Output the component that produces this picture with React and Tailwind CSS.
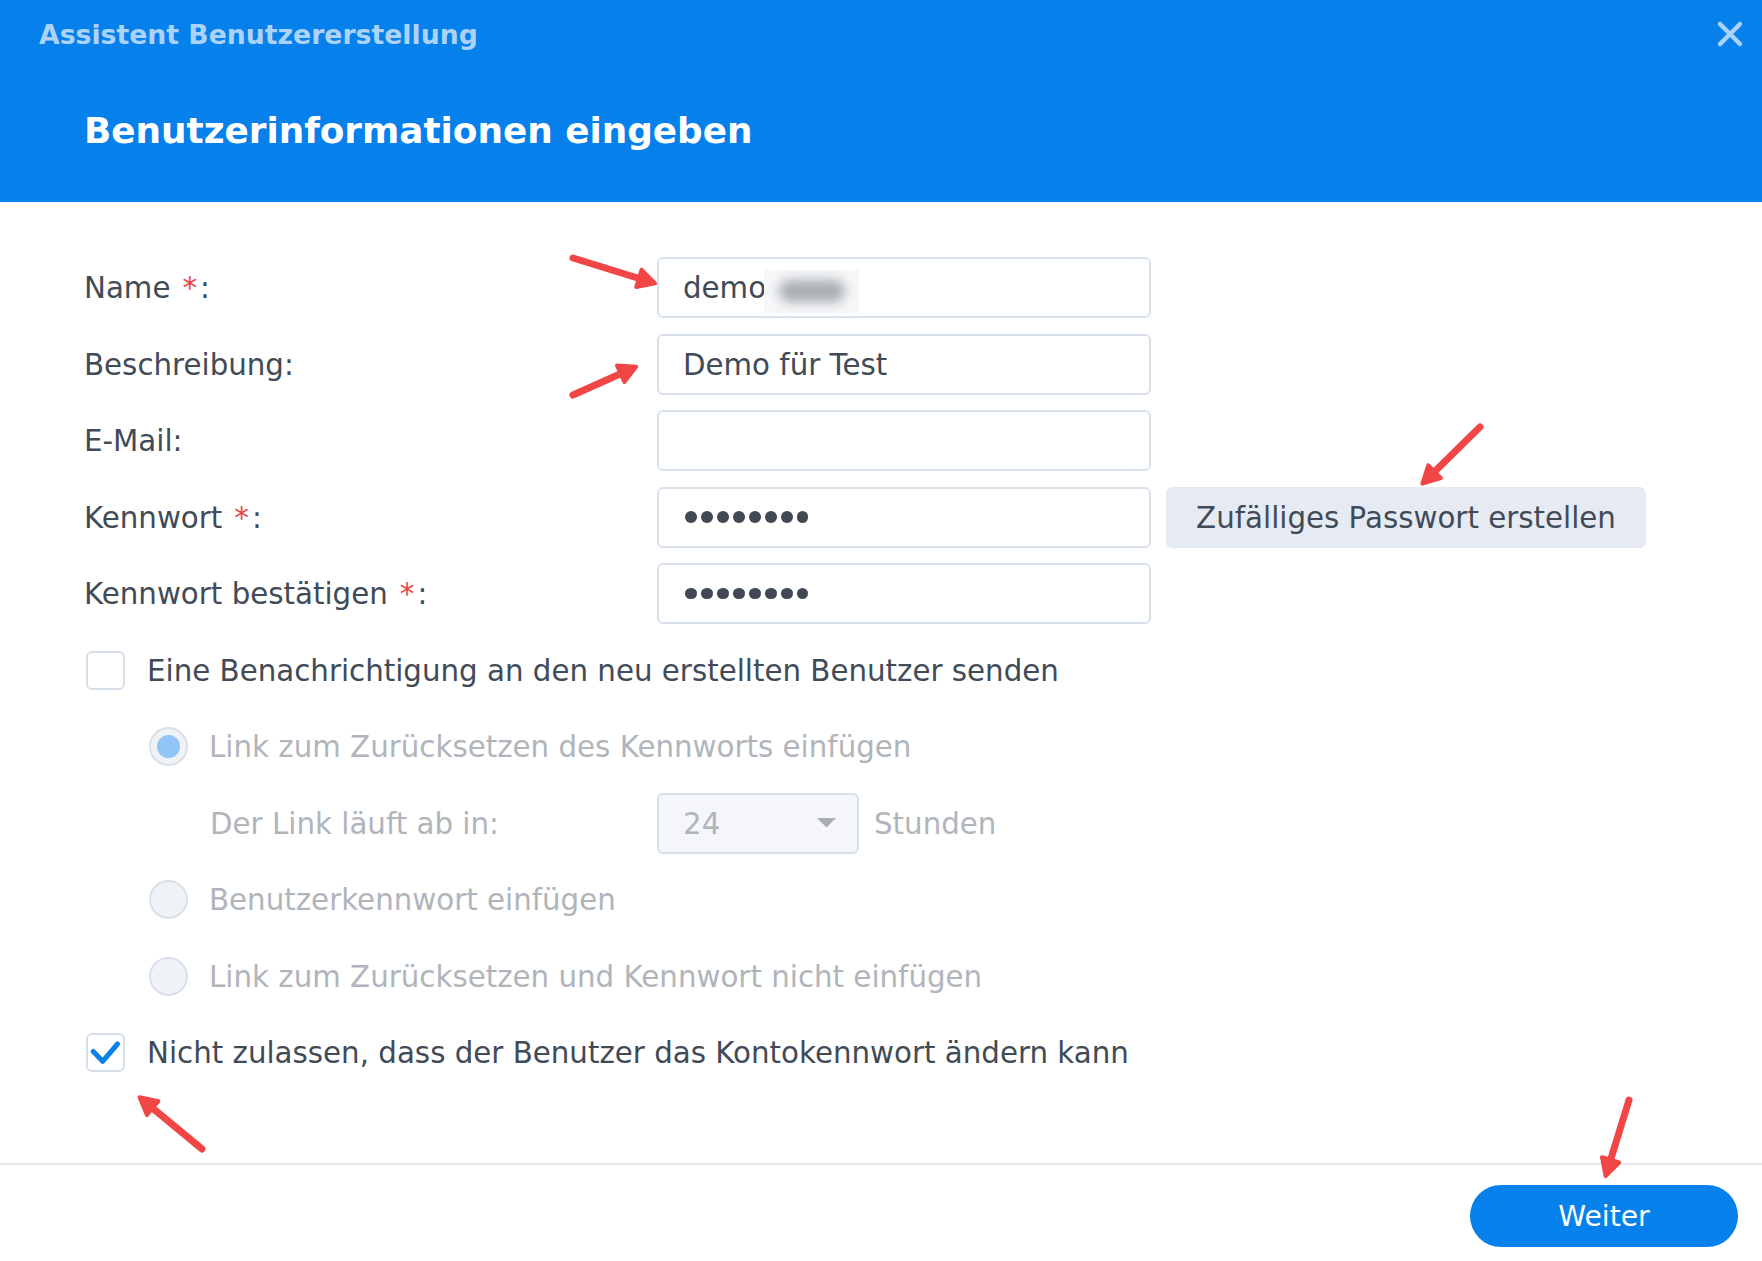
import React from "react";

const RED = "#f24646";

function Arrow({ x1, y1, x2, y2 }) {
  const dx = x2 - x1;
  const dy = y2 - y1;
  const len = Math.hypot(dx, dy);
  const ux = dx / len;
  const uy = dy / len;
  const hl = 17;
  const hw = 9;
  const tx = x2 - ux * 2;
  const ty = y2 - uy * 2;
  const bx = tx - ux * hl;
  const by = ty - uy * hl;
  const px = -uy;
  const py = ux;
  const pts = `${tx},${ty} ${bx + px * hw},${by + py * hw} ${bx - px * hw},${by - py * hw}`;
  return (
    <g>
      <line x1={x1} y1={y1} x2={bx + ux * 3} y2={by + uy * 3} stroke={RED} strokeWidth="7" strokeLinecap="round" />
      <polygon points={pts} fill={RED} stroke={RED} strokeWidth="4" strokeLinejoin="round" />
    </g>
  );
}

function Req() {
  return <span className="ml-[12px] mr-[3px] text-[#ea4848]">*</span>;
}

function Input({ children, pl = "pl-[24px]" }) {
  return (
    <div className={`w-[494px] h-full border-2 border-[#d9e2ec] rounded-[6px] bg-white flex items-center ${pl}`}>
      {children}
    </div>
  );
}

function Dots() {
  return (
    <div className="flex items-center gap-[4.4px]">
      {[0, 1, 2, 3, 4, 5, 6, 7].map((i) => (
        <div key={i} className="w-[11.6px] h-[11.6px] rounded-full bg-[#3f4853]" />
      ))}
    </div>
  );
}

function FieldRow({ label, req, children }) {
  return (
    <div className="h-[61px] flex items-center">
      <div className="w-[573px] pt-[3px]">
        {label}
        {req && <Req />}:
      </div>
      {children}
    </div>
  );
}

function Radio({ checked }) {
  return (
    <div className="w-[39px] h-[39px] shrink-0 rounded-full border-2 border-[#d9e0e8] bg-[#eff2f6] flex items-center justify-center">
      {checked && <div className="w-[23px] h-[23px] rounded-full bg-[#91c5f5]" />}
    </div>
  );
}

function Checkbox({ checked }) {
  return (
    <div className="w-[39px] h-[39px] shrink-0 rounded-[6px] border-2 border-[#d6dfe9] bg-white flex items-center justify-center">
      {checked && (
        <svg width="35" height="35" viewBox="0 0 35 35">
          <path d="M5.2 16.5 L14.7 26.3 L29.5 9" fill="none" stroke="#0a80ea" strokeWidth="5" strokeLinecap="round" strokeLinejoin="round" />
        </svg>
      )}
    </div>
  );
}

export default function App() {
  return (
    <div className="relative w-[1762px] h-[1261px] bg-white flex flex-col overflow-hidden font-['DejaVu_Sans',sans-serif]">
      <header className="h-[202px] shrink-0 bg-[#0680eb] flex flex-col">
        <div className="h-[68px] flex items-center justify-between pl-[39px] pr-[18px]">
          <span className="pt-[2px] text-[26.7px] font-bold leading-none text-[#abd3f9]">Assistent Benutzererstellung</span>
          <svg width="28" height="28" viewBox="0 0 28 28">
            <path d="M4 4 L24 24 M24 4 L4 24" stroke="#abd3f9" strokeWidth="4.5" strokeLinecap="round" />
          </svg>
        </div>
        <div className="mt-[36px] h-[52px] flex items-center pl-[84px]">
          <h1 className="pt-[2px] text-[35.8px] font-bold leading-none text-white">Benutzerinformationen eingeben</h1>
        </div>
      </header>

      <main className="flex-1 pt-[55px] pl-[84px] flex flex-col gap-[15.5px] text-[29.3px] leading-none text-[#414b57]">
        <FieldRow label="Name" req>
          <Input>
            <span className="pt-[3px]">demo</span>
            <span className="inline-flex w-[95px] h-[43px] mt-[7px] ml-[-2px] bg-[#f6f7f8] items-center justify-center">
              <span className="block w-[66px] h-[22px] rounded-full bg-[#a7acb2] blur-[6px]" />
            </span>
          </Input>
        </FieldRow>
        <FieldRow label="Beschreibung">
          <Input>
            <span className="pt-[3px]">Demo für Test</span>
          </Input>
        </FieldRow>
        <FieldRow label="E-Mail">
          <Input />
        </FieldRow>
        <FieldRow label="Kennwort" req>
          <Input pl="pl-[26px]">
            <Dots />
          </Input>
          <button className="ml-[15px] w-[480px] h-full rounded-[6px] bg-[#e6ebf3] text-[#414b57] flex items-center justify-center">
            <span className="pt-[3px]">Zufälliges Passwort erstellen</span>
          </button>
        </FieldRow>
        <FieldRow label="Kennwort bestätigen" req>
          <Input pl="pl-[26px]">
            <Dots />
          </Input>
        </FieldRow>

        <div className="h-[61px] flex items-center pl-[2px] gap-[22px]">
          <Checkbox />
          <span className="pt-[3px]">Eine Benachrichtigung an den neu erstellten Benutzer senden</span>
        </div>

        <div className="h-[61px] flex items-center pl-[65px] gap-[21px] text-[#b0b5bc]">
          <Radio checked />
          <span className="pt-[3px]">Link zum Zurücksetzen des Kennworts einfügen</span>
        </div>

        <div className="h-[61px] flex items-center pl-[126px] text-[#b0b5bc]">
          <div className="w-[447px] pt-[3px]">Der Link läuft ab in:</div>
          <div className="w-[202px] h-full border-2 border-[#d6dee8] rounded-[6px] bg-[#f4f6f9] flex items-center justify-between pl-[24px] pr-[21px]">
            <span className="pt-[3px]">24</span>
            <svg width="19" height="10" viewBox="0 0 19 10">
              <path d="M0 0 L19 0 L9.5 9.5 Z" fill="#a9aeb5" />
            </svg>
          </div>
          <span className="ml-[15px] pt-[3px]">Stunden</span>
        </div>

        <div className="h-[61px] flex items-center pl-[65px] gap-[21px] text-[#b0b5bc]">
          <Radio />
          <span className="pt-[3px]">Benutzerkennwort einfügen</span>
        </div>

        <div className="h-[61px] flex items-center pl-[65px] gap-[21px] text-[#b0b5bc]">
          <Radio />
          <span className="pt-[3px]">Link zum Zurücksetzen und Kennwort nicht einfügen</span>
        </div>

        <div className="h-[61px] flex items-center pl-[2px] gap-[22px]">
          <Checkbox checked />
          <span className="pt-[3px]">Nicht zulassen, dass der Benutzer das Kontokennwort ändern kann</span>
        </div>
      </main>

      <div className="h-[2px] shrink-0 bg-[#e6eaef]" />
      <footer className="h-[96px] shrink-0 flex justify-end pt-[20px] pr-[24px]">
        <button className="w-[268px] h-[62px] rounded-full bg-[#0680eb] text-white text-[28.2px] leading-none flex items-center justify-center">
          <span className="pt-[2px]">Weiter</span>
        </button>
      </footer>

      <svg className="absolute inset-0 pointer-events-none" width="1762" height="1261" viewBox="0 0 1762 1261">
        <Arrow x1={573} y1={258} x2={657} y2={284} />
        <Arrow x1={573} y1={395} x2={638} y2={366} />
        <Arrow x1={1480} y1={427} x2={1421} y2={485} />
        <Arrow x1={202} y1={1149} x2={138} y2={1096} />
        <Arrow x1={1629} y1={1100} x2={1605} y2={1178} />
      </svg>
    </div>
  );
}
